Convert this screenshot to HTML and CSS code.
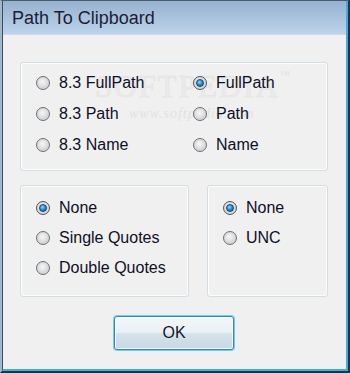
FILE: index.html
```html
<!DOCTYPE html>
<html lang="en">
<head>
  <meta charset="UTF-8">
  <title>Path To Clipboard</title>
  <link rel="stylesheet" href="styles.css">
</head>
<body>

  <div class="window">
    <div class="frame">
      <div class="titlebar">Path To Clipboard</div>

      <div class="client">
        <!-- path format -->
        <div class="group group-format">
          <label class="option"><span class="radio"></span>8.3 FullPath</label>
          <label class="option"><span class="radio checked"></span>FullPath</label>
          <label class="option"><span class="radio"></span>8.3 Path</label>
          <label class="option"><span class="radio"></span>Path</label>
          <label class="option"><span class="radio"></span>8.3 Name</label>
          <label class="option"><span class="radio"></span>Name</label>

          <div class="watermark">SOFTPEDIA<span class="tm">™</span></div>
          <div class="watermark-url">www.softpedia.com</div>
        </div>

        <div class="row">
          <div class="group group-quotes">
            <label class="option"><span class="radio checked"></span>None</label>
            <label class="option"><span class="radio"></span>Single Quotes</label>
            <label class="option"><span class="radio"></span>Double Quotes</label>
          </div>
          <div class="group group-unc">
            <label class="option"><span class="radio checked"></span>None</label>
            <label class="option"><span class="radio"></span>UNC</label>
          </div>
        </div>

        <div class="buttons">
          <button class="ok-button">OK</button>
        </div>
      </div>
    </div>
  </div>

</body>
</html>
```

FILE: styles.css
```css
body {
  margin: 0;
  padding: 0;
  font-family: "Liberation Sans", Arial, sans-serif;
  background: #f0f0f0;
}

.window {
  width: 350px;
  height: 373px;
  box-sizing: border-box;
  border-top: 1px solid #4d5c6c;
  border-left: 2px solid #a3b7cc;
  border-right: 2px solid #27323e;
  border-bottom: 2px solid #27323e;
}

.frame {
  height: 100%;
  box-sizing: border-box;
  border-left: 1px solid #404c58;
  border-right: 2px solid #3cb0e0;
  border-bottom: 2px solid #3cb0e0;
  display: flex;
  flex-direction: column;
}

.titlebar {
  height: 34px;
  flex: none;
  box-sizing: border-box;
  padding: 7px 0 0 9px;
  background: linear-gradient(#97b2d0, #bcd3ea);
  border-bottom: 1px solid #c9dbee;
  font-size: 18px;
  color: #1c1c38;
}

.client {
  flex: 1;
  background: #f0f0f0;
  padding: 27px 18px 0 17px;
  color: #0f0f26;
  font-size: 16px;
}

.group {
  box-sizing: border-box;
  border: 1px solid #d3dde4;
  border-radius: 3px;
  box-shadow: inset 0 0 0 1px #fafcfd;
  position: relative;
}

.group-format {
  height: 109px;
  display: grid;
  grid-template-columns: 157px 1fr;
  grid-auto-rows: 31px;
  padding: 4px 0 0 15px;
}

.row {
  display: flex;
  gap: 18px;
  margin-top: 14px;
}

.group-quotes,
.group-unc {
  height: 112px;
  display: grid;
  grid-auto-rows: 30px;
  align-content: start;
  padding: 7px 0 0 15px;
}

.group-quotes {
  width: 169px;
}

.group-unc {
  flex: 1;
}

.option {
  display: flex;
  align-items: center;
  gap: 9px;
  white-space: nowrap;
  position: relative;
  z-index: 1;
}

.radio {
  width: 14px;
  height: 14px;
  flex: none;
  box-sizing: border-box;
  border-radius: 50%;
  border: 1px solid #6c7076;
  box-shadow: inset 0 0 0 1px #d9dadc;
  background: radial-gradient(circle at 45% 40%, #f6f6f6 0%, #dcdddf 50%, #a6a9ad 100%);
  display: flex;
  align-items: center;
  justify-content: center;
}

.radio.checked {
  border-color: #50565d;
}

.radio.checked::after {
  content: "";
  width: 8px;
  height: 8px;
  box-sizing: border-box;
  border-radius: 50%;
  border: 1px solid #15466e;
  background: radial-gradient(circle at 40% 35%, #8fdcff 0%, #2b93d4 45%, #0d558f 100%);
}

/* faint watermark over the first group */
.watermark {
  position: absolute;
  left: 74px;
  top: 6px;
  font-family: "Liberation Serif", serif;
  font-size: 31px;
  letter-spacing: 2px;
  color: #ebebeb;
  -webkit-text-stroke: 0.6px #e3e3e3;
  z-index: 0;
}

.watermark .tm {
  font-size: 10px;
  vertical-align: top;
  -webkit-text-stroke: 0;
  color: #e0e0e0;
}

.watermark-url {
  position: absolute;
  left: 108px;
  top: 43px;
  font-family: "Liberation Serif", serif;
  font-style: italic;
  font-size: 14px;
  letter-spacing: 1px;
  color: #e2e2e2;
  z-index: 0;
}

.buttons {
  display: flex;
  justify-content: center;
  margin-top: 19px;
}

.ok-button {
  width: 120px;
  height: 34px;
  font-family: "Liberation Sans", Arial, sans-serif;
  font-size: 16px;
  color: #15152a;
  border: 1px solid #3c7fb1;
  border-radius: 3px;
  box-shadow: 0 0 0 1px #6fd0f6, inset 0 0 0 1px #f6fbfd;
  background: linear-gradient(#f1f6f9 0%, #eaf1f5 48%, #d5e3eb 52%, #c6d9e4 100%);
  cursor: pointer;
}
```
